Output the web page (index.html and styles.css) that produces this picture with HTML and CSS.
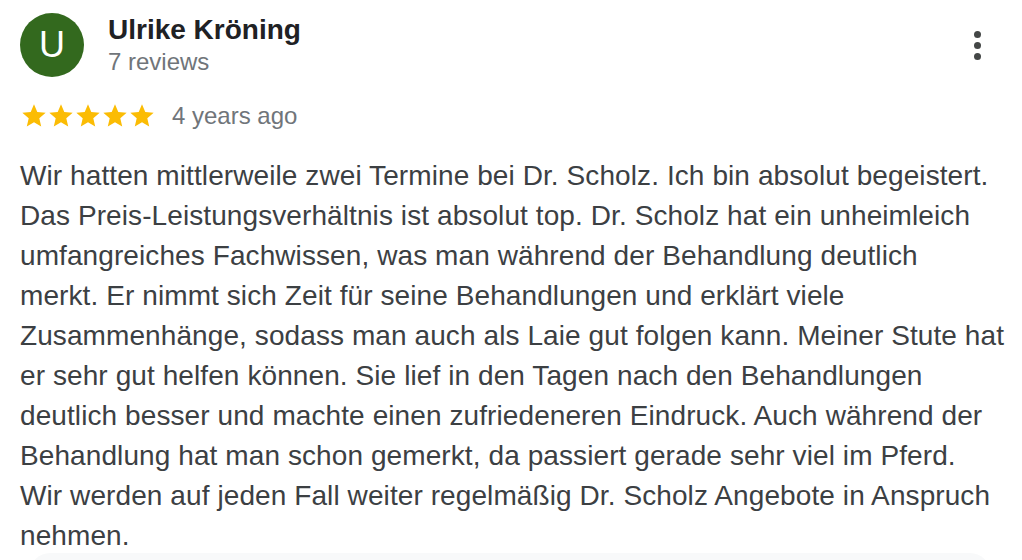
FILE: index.html
```html
<!DOCTYPE html>
<html lang="de">
<head>
<meta charset="utf-8">
<link rel="stylesheet" href="styles.css">
</head>
<body>
<div class="review">
  <div class="header">
    <div class="avatar">U</div>
    <div class="who">
      <div class="name">Ulrike Kröning</div>
      <div class="count">7 reviews</div>
    </div>
    <div class="menu"><span></span><span></span><span></span></div>
  </div>
  <div class="rating">
    <div class="stars">
      <svg viewBox="0 0 24 24" class="star"><path d="M12 17.27L18.18 21l-1.64-7.03L22 9.24l-7.19-.61L12 2 9.19 8.63 2 9.24l5.46 4.73L5.82 21z"/></svg>
      <svg viewBox="0 0 24 24" class="star"><path d="M12 17.27L18.18 21l-1.64-7.03L22 9.24l-7.19-.61L12 2 9.19 8.63 2 9.24l5.46 4.73L5.82 21z"/></svg>
      <svg viewBox="0 0 24 24" class="star"><path d="M12 17.27L18.18 21l-1.64-7.03L22 9.24l-7.19-.61L12 2 9.19 8.63 2 9.24l5.46 4.73L5.82 21z"/></svg>
      <svg viewBox="0 0 24 24" class="star"><path d="M12 17.27L18.18 21l-1.64-7.03L22 9.24l-7.19-.61L12 2 9.19 8.63 2 9.24l5.46 4.73L5.82 21z"/></svg>
      <svg viewBox="0 0 24 24" class="star"><path d="M12 17.27L18.18 21l-1.64-7.03L22 9.24l-7.19-.61L12 2 9.19 8.63 2 9.24l5.46 4.73L5.82 21z"/></svg>
    </div>
    <span class="date">4 years ago</span>
  </div>
  <p class="text">Wir hatten mittlerweile zwei Termine bei Dr. Scholz. Ich bin absolut begeistert.<br>Das Preis-Leistungsverhältnis ist absolut top. Dr. Scholz hat ein unheimleich<br>umfangreiches Fachwissen, was man während der Behandlung deutlich<br>merkt. Er nimmt sich Zeit für seine Behandlungen und erklärt viele<br>Zusammenhänge, sodass man auch als Laie gut folgen kann. Meiner Stute hat<br>er sehr gut helfen können. Sie lief in den Tagen nach den Behandlungen<br>deutlich besser und machte einen zufriedeneren Eindruck. Auch während der<br>Behandlung hat man schon gemerkt, da passiert gerade sehr viel im Pferd.<br>Wir werden auf jeden Fall weiter regelmäßig Dr. Scholz Angebote in Anspruch<br>nehmen.</p>
  <div class="reply"></div>
</div>
</body>
</html>
```

FILE: styles.css
```css
html, body {
  margin: 0;
  padding: 0;
  background: #ffffff;
}
body {
  font-family: "Liberation Sans", Arial, sans-serif;
  overflow: hidden;
  height: 560px;
}
.review {
  padding: 13px 0 0 20px;
  height: 547px;
  overflow: hidden;
}
.header {
  display: flex;
  align-items: flex-start;
}
.avatar {
  width: 64px;
  height: 64px;
  border-radius: 50%;
  background: #33691e;
  color: #ffffff;
  font-size: 36px;
  line-height: 64px;
  text-align: center;
  flex: none;
}
.who {
  margin-left: 24px;
  flex: 1;
  padding-top: 1px;
}
.name {
  font-size: 28px;
  font-weight: bold;
  color: #202124;
  line-height: 32px;
}
.count {
  font-size: 24px;
  color: #70757a;
  line-height: 30px;
  margin-top: 1px;
}
.menu {
  display: flex;
  flex-direction: column;
  gap: 4px;
  padding-top: 18px;
  margin-right: 41px;
}
.menu span {
  width: 7px;
  height: 7px;
  border-radius: 50%;
  background: #444746;
}
.rating {
  display: flex;
  align-items: center;
  margin-top: 23px;
  height: 32px;
}
.stars {
  display: flex;
}
.star {
  width: 28px;
  height: 28px;
  fill: #fbbc04;
  margin-right: -1px;
}
.date {
  margin-left: 17px;
  font-size: 24px;
  color: #70757a;
}
.text {
  margin: 24px 0 0 0;
  font-size: 28px;
  line-height: 40px;
  letter-spacing: 0.09px;
  color: #3c4043;
  width: 1000px;
}
.reply {
  margin: -3px 32px 0 10px;
  height: 40px;
  background: #f8f9fa;
  border-radius: 20px;
}
```
